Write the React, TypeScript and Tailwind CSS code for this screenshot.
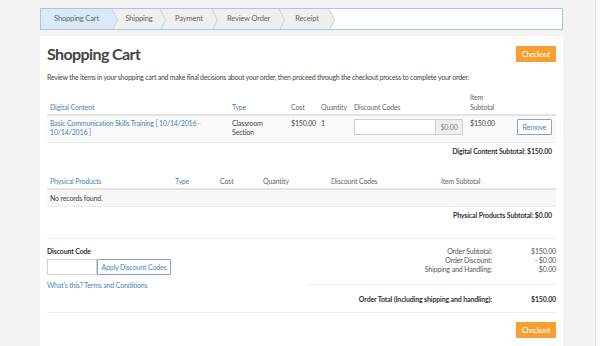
const steps = [
  { label: "Shopping Cart", w: "w-[71px]", active: true },
  { label: "Shipping", w: "w-[42px]", active: false },
  { label: "Payment", w: "w-[46px]", active: false },
  { label: "Review Order", w: "w-[61px]", active: false },
  { label: "Receipt", w: "w-[44px]", active: false },
];

const Arrow = ({ from, to }: { from: string; to: string }) => (
  <svg width="6" height="22" viewBox="0 0 6 22" className="shrink-0 block">
    <rect x="0" y="0" width="6" height="22" fill={to} />
    <polygon points="0,0 5.5,11 0,22" fill={from} />
    <polyline points="0,0 5.5,11 0,22" fill="none" stroke="#c9cfd6" strokeWidth="1" />
  </svg>
);

const Breadcrumb = () => (
  <div className="mt-[8px] h-[22px] border border-[#aac6de] bg-white flex items-stretch overflow-hidden">
    {steps.map((s, i) => {
      const bg = s.active ? "#dbe9f6" : "#efefef";
      const next = i < steps.length - 1 ? "#efefef" : "#ffffff";
      return (
        <div key={s.label} className="flex items-stretch">
          <div
            className={`${s.w} flex items-center justify-center text-[7.5px] ${
              s.active ? "bg-[#dbe9f6] text-[#56687a]" : "bg-[#efefef] text-[#666]"
            }`}
          >
            {s.label}
          </div>
          <Arrow from={bg} to={next} />
        </div>
      );
    })}
  </div>
);

const CheckoutButton = () => (
  <button className="w-[40px] h-[16px] bg-[#f6a033] text-white text-[7px] rounded-[1px] flex items-center justify-center">
    Checkout
  </button>
);

const DigitalTable = () => (
  <div>
    <div className="grid grid-cols-[185px_59px_30px_33px_116px_47px_39px] items-end pb-[2px] border-b-2 border-[#e3e3e3] text-[7px] leading-[10px] text-[#666]">
      <div className="pl-[3px] text-[#4a83bd]">Digital Content</div>
      <div className="text-[#4a83bd]">Type</div>
      <div>Cost</div>
      <div>Quantity</div>
      <div>Discount Codes</div>
      <div>
        Item
        <br />
        Subtotal
      </div>
      <div />
    </div>
    <div className="grid grid-cols-[185px_59px_30px_33px_116px_47px_39px] items-start pt-[3px] pb-[5px] bg-[#f9f9f9] border-b border-[#ececec] text-[7px] leading-[9px] text-[#444]">
      <div className="pl-[3px] pr-[24px] text-[#4a83bd]">
        Basic Communication Skills Training [ 10/14/2016 - 10/14/2016 ]
      </div>
      <div>
        Classroom
        <br />
        Section
      </div>
      <div>$150.00</div>
      <div>1</div>
      <div className="flex">
        <div className="w-[82px] h-[16px] bg-white border border-[#d0d0d0]" />
        <div className="w-[27px] h-[16px] bg-[#eeeeee] border border-l-0 border-[#d0d0d0] text-[#888] flex items-center justify-center">
          $0.00
        </div>
      </div>
      <div>$150.00</div>
      <div>
        <button className="w-[35px] h-[16px] bg-white border border-[#7fa6cc] text-[#4a83bd] text-[7px] rounded-[1px]">
          Remove
        </button>
      </div>
    </div>
    <div className="mt-[4px] pr-[4px] text-right text-[7px] leading-[9px] font-bold text-[#333]">
      Digital Content Subtotal: $150.00
    </div>
  </div>
);

const PhysicalTable = () => (
  <div className="mt-[20px]">
    <div className="grid grid-cols-[128px_45px_43px_68px_110px_115px] pb-[2px] border-b-2 border-[#e3e3e3] text-[7px] leading-[10px] text-[#666]">
      <div className="pl-[3px] text-[#4a83bd]">Physical Products</div>
      <div className="text-[#4a83bd]">Type</div>
      <div>Cost</div>
      <div>Quantity</div>
      <div>Discount Codes</div>
      <div>Item Subtotal</div>
    </div>
    <div className="h-[17px] pl-[3px] flex items-center bg-[#f7f7f7] border-b border-[#ececec] text-[7px] text-[#444]">
      No records found.
    </div>
    <div className="mt-[4px] pr-[4px] text-right text-[7px] leading-[9px] font-bold text-[#333]">
      Physical Products Subtotal: $0.00
    </div>
  </div>
);

const SummaryLine = ({ label, value, bold }: { label: string; value: string; bold?: boolean }) => (
  <div className={`flex text-[7px] leading-[9px] ${bold ? "font-bold text-[#333]" : "text-[#555]"}`}>
    <div className="flex-1 text-right">{label}</div>
    <div className="w-[64px] text-right">{value}</div>
  </div>
);

const BottomSection = () => (
  <div className="mt-[18px] border-t border-[#eeeeee]">
    <div className="flex pt-[8px]">
      <div className="flex-1">
        <div className="text-[7px] leading-[9px] font-bold text-[#333]">Discount Code</div>
        <div className="mt-[3px] flex">
          <div className="w-[50px] h-[16px] border border-[#d0d0d0] bg-white" />
          <button className="w-[74px] h-[16px] bg-white border border-[#7fa6cc] text-[#4a83bd] text-[7px] rounded-[1px]">
            Apply Discount Codes
          </button>
        </div>
        <div className="mt-[6px] text-[7px] leading-[9px] text-[#4a83bd]">
          What's this? Terms and Conditions
        </div>
      </div>
      <div className="w-[249px]">
        <SummaryLine label="Order Subtotal:" value="$150.00" />
        <SummaryLine label="Order Discount:" value="- $0.00" />
        <SummaryLine label="Shipping and Handling:" value="$0.00" />
        <div className="mt-[10px] border-t border-[#eeeeee] pt-[10px]">
          <SummaryLine label="Order Total (Including shipping and handling):" value="$150.00" bold />
        </div>
      </div>
    </div>
    <div className="mt-[8px] border-t border-[#eeeeee]" />
    <div className="mt-[9px] flex justify-end">
      <CheckoutButton />
    </div>
  </div>
);

export default function App() {
  return (
    <div className="w-[600px] h-[346px] bg-[#f3f3f3] flex overflow-hidden font-['Lato',sans-serif] tracking-[-0.15px]">
      <div className="ml-[40px] w-[523px] flex flex-col">
        <Breadcrumb />
        <div className="mt-[6px] flex-1 bg-white px-[7px]">
          <div className="mt-[10px] h-[16px] flex items-center justify-between">
            <h1 className="text-[16px] font-bold text-[#444] leading-[16px] tracking-[-0.6px]">Shopping Cart</h1>
            <CheckoutButton />
          </div>
          <p className="mt-[11px] text-[7px] leading-[9px] text-[#444] tracking-[-0.25px]">
            Review the items in your shopping cart and make final decisions about your order, then proceed through the checkout process to complete your order.
          </p>
          <div className="mt-[10px]">
            <DigitalTable />
          </div>
          <PhysicalTable />
          <BottomSection />
        </div>
      </div>
      <div className="ml-[32px] w-[1px] bg-[#e2e2e2]" />
      <div className="flex-1 bg-[#fafafa]" />
    </div>
  );
}
